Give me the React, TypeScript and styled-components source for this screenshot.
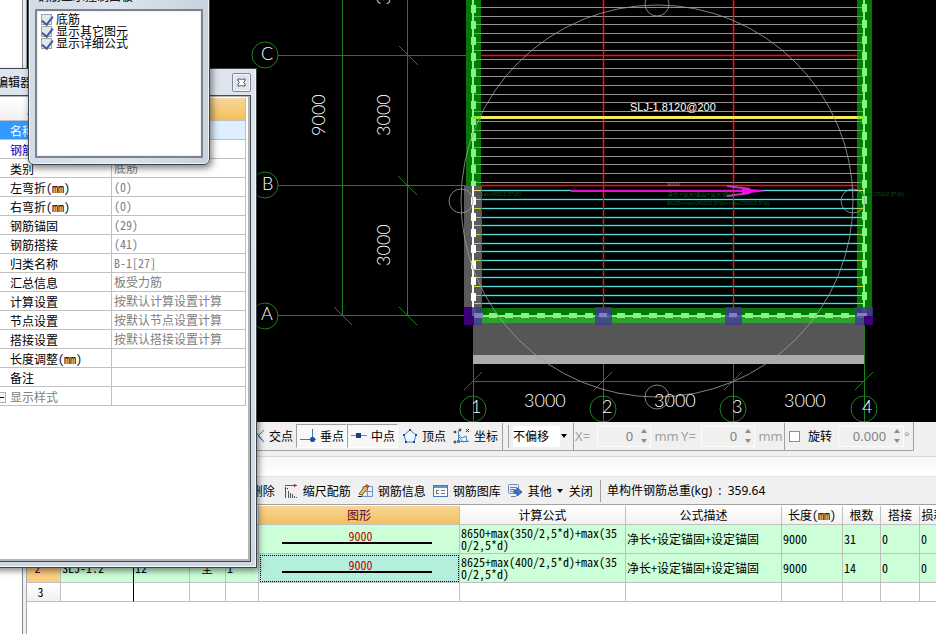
import React from "react";
import styled, { createGlobalStyle, css } from "styled-components";

const cjk = `"Noto Sans CJK SC", sans-serif`;
const mono = `"Noto Sans Mono CJK SC", "Liberation Mono", "Noto Sans CJK SC", monospace`;
const ui = `"Noto Sans", "Noto Sans CJK SC", sans-serif`;

const GlobalStyle = createGlobalStyle`
  * { box-sizing: border-box; }
  html, body, #root { height: 100%; margin: 0; }
  body { background: #fff; color: #000; font: 12px/16px ${cjk}; overflow: hidden; }
  button, input, select { font: inherit; color: inherit; }
`;

/* ---------- page ---------- */

const Page = styled.div`
  position: relative;
  display: grid;
  grid-template-columns: 22px 5px minmax(0, 1fr);
  height: 100vh;
  overflow: hidden;
`;

const SidePane = styled.aside`
  background: #fff;
`;

const Splitter = styled.div`
  background: #f0f0f0;
  border-left: 1px solid #828790;
  border-right: 1px solid #a8a8a8;
`;

const Main = styled.main`
  display: flex;
  flex-direction: column;
  min-width: 0;
  overflow: hidden;
`;

const Viewport = styled.section`
  flex: 1 1 0;
  min-height: 0;
  background: #000;

  svg {
    display: block;
    width: 100%;
    height: 100%;
  }
`;

/* ---------- snap bar ---------- */

const SnapArea = styled.div`
  flex: none;
  display: flex;
  height: 35px;
  padding-bottom: 5px;
  background: #f0f0f0;
  border-bottom: 1px solid #d8d8d8;
`;

const SnapBar = styled.div`
  display: flex;
  align-items: center;
  width: 887px;
  flex: none;
  height: 29px;
  padding-left: 222px;
  border-right: 1px solid #a0a0a0;
  border-bottom: 1px solid #a0a0a0;
  white-space: nowrap;
`;

const SnapButton = styled.button<{ $pressed?: boolean }>`
  display: flex;
  align-items: center;
  gap: 4px;
  height: 24px;
  padding: 0 2px 0 3px;
  border: 1px solid transparent;
  background: transparent;
  white-space: nowrap;
  ${(p) =>
    p.$pressed &&
    css`
      background: #f8f8f8;
      border-color: #a0a0a0 #fff #fff #a0a0a0;
    `}
`;

const Divider = styled.i<{ $h?: number; $gap?: number }>`
  flex: none;
  width: 1px;
  height: ${(p) => p.$h ?? 27}px;
  margin: 0 ${(p) => p.$gap ?? 0}px;
  background: #a0a0a0;
`;

const OffsetSelect = styled.select`
  appearance: none;
  width: 47px;
  height: 21px;
  padding: 0;
  border: 0;
  border-radius: 0;
  background: #fff;
`;

const SelectBox = styled.label`
  display: flex;
  align-items: center;
  gap: 1px;
  width: 59px;
`;

const Unit = styled.label<{ $w: number }>`
  width: ${(p) => p.$w}px;
  color: #a0a0a0;
  font-family: ${ui};
  font-size: 13px;
`;

const SpinBox = styled.div<{ $w: number }>`
  display: flex;
  align-items: center;
  width: ${(p) => p.$w}px;
  height: 21px;
  border: 1px solid #fcfcfc;
  color: #838383;

  input {
    flex: 1;
    width: 0;
    height: 18px;
    padding: 0 8px 0 0;
    border: 0;
    background: transparent;
    text-align: right;
    font: 13px/18px ${ui};
  }
`;

const Spinners = styled.span`
  display: flex;
  flex-direction: column;
  gap: 2px;
  padding-right: 3px;

  button {
    display: flex;
    padding: 2px 0;
    border: 0;
    background: transparent;
  }
`;

const TickBox = styled.input`
  appearance: none;
  position: relative;
  flex: none;
  width: 11px;
  height: 11px;
  margin: 0;
  border: 1px solid #8e8f8f;
  background: #fff;

  &:checked {
    border-color: #a0a4a8;
    background: #e3e7ea;
  }
  &:checked::before {
    content: "";
    position: absolute;
    left: 2px;
    top: -1px;
    width: 5px;
    height: 9px;
    border: solid #3d5a9c;
    border-width: 0 2px 2px 0;
    transform: rotate(38deg);
  }
`;

const RotateLabel = styled.label`
  display: flex;
  align-items: center;
  gap: 8px;
  width: 53px;
  padding-left: 4px;
`;

/* ---------- rebar panel ---------- */

const PanelCaption = styled.div`
  flex: none;
  height: 19px;
  background: linear-gradient(#f7f7f7, #fff);
`;

const Toolbar = styled.div`
  flex: none;
  display: flex;
  align-items: center;
  height: 29px;
  padding-left: 221px;
  background: #f0f0f0;
  border-top: 1px solid #e2e2e2;
  border-bottom: 1px solid #a0a0a0;
  white-space: nowrap;
`;

const ToolButton = styled.button<{ $mr: number }>`
  display: flex;
  align-items: center;
  gap: 5px;
  margin-right: ${(p) => p.$mr}px;
  padding: 0;
  border: 0;
  background: transparent;
  white-space: nowrap;
`;

const Total = styled.span`
  font-family: ${ui};
`;

const GridArea = styled.div`
  flex: none;
  min-height: 129px;
  padding-top: 1px;
  background: #fff;
  overflow: hidden;
`;

const Grid = styled.table`
  table-layout: fixed;
  width: 921px;
  border-collapse: separate;
  border-spacing: 0;
  font: 12px/12px ${mono};
`;

const Th = styled.th<{ $active?: boolean; $black?: boolean }>`
  height: 19px;
  padding: 0;
  overflow: hidden;
  white-space: nowrap;
  font-weight: 400;
  text-align: center;
  color: ${(p) => (p.$active ? "#600030" : "#000")};
  background: ${(p) =>
    p.$active ? "linear-gradient(#f8d596, #f2c05f)" : "linear-gradient(#fff, #f1f1f1)"};
  border-right: 1px solid ${(p) => (p.$black ? "#000" : "#c0c0c0")};
  border-bottom: 1px solid #c0c0c0;
`;

const Td = styled.td<{ $tone?: "green" | "teal"; $black?: boolean; $low?: boolean; $center?: boolean }>`
  height: ${(p) => (p.$low ? 19 : 29)}px;
  padding: 0 2px 0 1px;
  overflow: hidden;
  word-break: break-all;
  text-align: ${(p) => (p.$center ? "center" : "left")};
  background: ${(p) => (p.$tone === "green" ? "#ccffd8" : p.$tone === "teal" ? "#b4efde" : "#fff")};
  border-right: 1px solid ${(p) => (p.$black ? "#000" : "#c0c0c0")};
  border-bottom: 1px solid #c0c0c0;
  ${(p) => p.$tone === "teal" && "outline: 1px dotted #000; outline-offset: -2px;"}
`;

const RowHead = styled.th<{ $active?: boolean; $low?: boolean }>`
  height: ${(p) => (p.$low ? 19 : 29)}px;
  padding: 0 6px 0 0;
  font-weight: 400;
  color: ${(p) => (p.$active ? "#600030" : "#000")};
  background: ${(p) => (p.$active ? "#fbcf83" : "linear-gradient(#fff, #f1f1f1)")};
  border-right: 1px solid #c0c0c0;
  border-bottom: 1px solid #c0c0c0;
`;

const Shape = styled.span`
  display: block;
  width: 150px;
  margin: 0 auto 4px 22px;
  padding-left: 7px;
  border-bottom: 2px solid #000;
  color: #c00000;
  line-height: 12px;
  text-align: center;
`;

/* ---------- floating windows ---------- */

const PropertyWindow = styled.section`
  position: absolute;
  left: -60px;
  top: 68px;
  display: flex;
  flex-direction: column;
  width: 317px;
  height: 500px;
  padding: 0 5px 5px 0;
  border: 1px solid #3e444c;
  background: linear-gradient(#dfe5ee, #cfd9e5);
  box-shadow: inset -1px -1px 0 #f3f6fa, 2px 3px 6px rgba(0, 0, 0, 0.45);
`;

const PropertyTitle = styled.header`
  display: flex;
  align-items: center;
  justify-content: space-between;
  height: 26px;
  padding-left: 31px;
`;

const CloseButton = styled.button`
  display: flex;
  align-items: center;
  justify-content: center;
  width: 19px;
  height: 19px;
  margin-top: 1px;
  padding: 0;
  border: 1px solid #7f8793;
  border-radius: 2px;
  background: #dfe4eb;
  box-shadow: inset 0 0 0 1px #f5f7fa;
`;

const PropertyBody = styled.div`
  flex: 1;
  padding-top: 1px;
  background: #fff;
  border: solid #474c53;
  border-width: 1px 1px 1px 0;
  box-shadow: inset -2px -2px 0 #b4b4b4, inset 0 1px 0 #b4b4b4;
`;

const PropertyTable = styled.table`
  table-layout: fixed;
  width: 305px;
  margin-top: 1px;
  border-collapse: separate;
  border-spacing: 0;
  font: 12px/14px ${mono};
`;

const PropHead = styled.th<{ $active?: boolean }>`
  height: 23px;
  padding: 0 0 0 86px;
  text-align: left;
  font-weight: 400;
  background: ${(p) =>
    p.$active ? "linear-gradient(#f8d79b, #f2bf5c)" : "linear-gradient(#fff, #f0f0f0)"};
  border-right: 1px solid #c0c0c0;
  border-bottom: 1px solid #c0c0c0;
`;

const PropName = styled.th<{ $kind?: "selected" | "link" | "muted" }>`
  height: 19px;
  padding: 2px 0 0 69px;
  text-align: left;
  font-weight: 400;
  white-space: nowrap;
  color: ${(p) =>
    p.$kind === "selected" ? "#fff" : p.$kind === "link" ? "#0000c0" : p.$kind === "muted" ? "#808080" : "#000"};
  background: ${(p) => (p.$kind === "selected" ? "#3399ff" : "#fff")};
  border-right: 1px solid #c0c0c0;
  border-bottom: 1px solid #c0c0c0;
`;

const PropValue = styled.td<{ $selected?: boolean }>`
  height: 19px;
  padding: 0 0 0 2px;
  color: #808080;
  white-space: pre;
  background: ${(p) => (p.$selected ? "#dfefff" : "#fff")};
  border-right: 1px solid #c0c0c0;
  border-bottom: 1px solid #c0c0c0;
`;

const NameLine = styled.span`
  display: flex;
  align-items: center;
  height: 14px;
`;

const Expander = styled.button`
  display: flex;
  align-items: center;
  justify-content: center;
  width: 11px;
  height: 11px;
  margin: 0 4px 0 -15px;
  padding: 0;
  border: 1px solid #b0b0b0;
  background: #f4f4f4;
`;

const DisplayDialog = styled.section`
  position: absolute;
  left: 28px;
  top: -16px;
  width: 182px;
  height: 181px;
  padding: 0 6px 6px;
  border: 1px solid #40464e;
  border-radius: 6px;
  background: linear-gradient(90deg, #d2dbe6, #dde4ec 50%, #c7d2de);
  box-shadow: inset 0 0 0 1px #eef2f7, 2px 3px 7px rgba(0, 0, 0, 0.5);
`;

const DialogTitle = styled.h2`
  height: 24px;
  margin: 0;
  padding: 3px 0 0 2px;
  font: 12px/16px ${cjk};
`;

const CheckList = styled.div`
  height: 149px;
  padding: 2px 4px;
  border: 2px solid #7d838b;
  outline: 1px solid #eef2f7;
  outline-offset: -3px;
  box-shadow: inset 0 0 0 1px #8b9096;
  background: #fff;
`;

const CheckItem = styled.label`
  display: flex;
  align-items: center;
  gap: 4px;
  height: 12px;
  line-height: 12px;
  white-space: nowrap;
`;

/* ---------- icons ---------- */

const Arrow = ({ up = false, dark = false }: { up?: boolean; dark?: boolean }) => (
  <svg width="6" height="4" viewBox="0 0 6 4">
    <path d={up ? "M0 4L3 0L6 4Z" : "M0 0H6L3 4Z"} fill={dark ? "#000" : "#8c8c8c"} />
  </svg>
);

const CrossIcon = () => (
  <svg width="12" height="16" viewBox="0 0 12 16" fill="none" stroke="#3c6eb4">
    <path d="M1 2L11 14M11 2L5 8L11 14" />
  </svg>
);

const PerpIcon = () => (
  <svg width="16" height="16" viewBox="0 0 16 16">
    <path d="M0 11.500H16M12.500 1V12" stroke="#3c78be" fill="none" />
    <rect x="10" y="9" width="5" height="5" rx="2" fill="#1e50a0" />
  </svg>
);

const MidIcon = () => (
  <svg width="16" height="16" viewBox="0 0 16 16">
    <path d="M0 7.500H16" stroke="#5a8cc8" />
    <rect x="5" y="5" width="5" height="5" fill="#1e3c8c" />
  </svg>
);

const VertexIcon = () => (
  <svg width="16" height="16" viewBox="0 0 16 16">
    <path d="M8 2L14 7L12 14H4L2 7Z" stroke="#4682c8" fill="#eef6ff" />
    <path d="M7 1h2v2H7zM13 6h2v2h-2zM11 13h2v2h-2zM3 13h2v2H3zM1 6h2v2H1z" fill="#1e468c" />
  </svg>
);

const CoordIcon = () => (
  <svg width="17" height="17" viewBox="0 0 17 17" fill="none">
    <path d="M5.500 3V13.500H16M5 6L9 10L13 8L14 13L10 14L6 9" stroke="#4682be" />
    <path d="M13 1l3 3m0-3l-3 3" stroke="#333" />
    <circle cx="2" cy="4" r="1" stroke="#222" />
    <circle cx="7" cy="2" r="1" stroke="#222" />
    <circle cx="2" cy="14" r="1" stroke="#222" />
    <path d="M4 12h3v3H4z" fill="#4682be" />
  </svg>
);

const ScaleIcon = () => (
  <svg width="13" height="16" viewBox="0 0 13 16" fill="none">
    <path d="M0 2.500H12M9 1l2 1.500L9 4" stroke="#b03028" />
    <path d="M.5 4V15M3.500 8V15M5.500 10V15M7.500 11V15M9.500 13V15M11.500 14V15" stroke="#555" />
    <path d="M0 5.500h4" stroke="#222" strokeDasharray="1 1" />
  </svg>
);

const InfoIcon = () => (
  <svg width="15" height="15" viewBox="0 0 15 15" fill="none">
    <path d="M5 3.500H14.500V13.500H4.500Z" fill="#e6f0fc" stroke="#6e96c8" />
    <path d="M9.500 4V13M5 8.500H14" stroke="#6e96c8" />
    <path d="M1 11L7 3L10 5L4 12Z" fill="#e8c070" stroke="#7c5a28" />
    <path d="M7 3L8.500 1L12 3L10 5Z" fill="#c8503c" />
    <path d="M0 13.500h4" stroke="#222" />
  </svg>
);

const LibraryIcon = () => (
  <svg width="15" height="14" viewBox="0 0 15 14" fill="none">
    <rect x=".5" y="1.500" width="14" height="11" fill="#f4f8fd" stroke="#4678b4" />
    <path d="M1 3h13" stroke="#5a96dc" strokeWidth="2" />
    <path d="M3.500 6v4M3 6.500h3M3 9.500h3M8 6.500h4M8 9.500h4" stroke="#7c7060" />
  </svg>
);

const OtherIcon = () => (
  <svg width="15" height="14" viewBox="0 0 15 14" fill="none">
    <rect x=".5" y=".5" width="10" height="9" rx="1" fill="#e8f0fa" stroke="#6e8cb4" />
    <path d="M2 3.500h7M2 5.500h4M2 7.500h3M3 12.500h5" stroke="#6e82a0" />
    <path d="M6 6h3V4l5 4-5 4v-3H6z" fill="#3c78dc" stroke="#2850a0" />
  </svg>
);

/* ---------- drawing ---------- */

const CadText = styled.text`
  fill: #fff;
  font: 300 18px Lato, sans-serif;
`;

const RebarLabel = styled.text`
  fill: #fff;
  font: 11px "Liberation Sans", sans-serif;
`;

const TinyNote = styled.text<{ $grey?: boolean }>`
  fill: ${(p) => (p.$grey ? "#8c8c8c" : "#0c5016")};
  font: 6px "Liberation Sans", "Noto Sans CJK SC", sans-serif;
`;

const greyBars = [7, 16, 24, 33, 42, 50, 59, 68, 76, 85, 94, 102, 111, 121, 130, 138, 147, 156, 164, 173, 182];
const cyanBars = [190, 199, 208, 217, 225, 234, 243, 251, 260, 269, 277, 286, 295, 303];
const axes = [473, 603, 733, 864];

const Drawing = () => (
  <svg viewBox="27 0 909 422" role="img" aria-label="板钢筋平面图">
    <g fill="#1f801f" shapeRendering="crispEdges">
      <rect x="342" y="0" width="1" height="316" />
      <rect x="407" y="0" width="1" height="316" />
      <rect x="278" y="55" width="188" height="1" />
      <rect x="278" y="185" width="188" height="1" />
      <rect x="278" y="315" width="188" height="1" />
      <rect x="473" y="381" width="392" height="1" />
      {axes.map((x) => (
        <rect key={x} x={x} y="323" width="1" height="99" />
      ))}
    </g>

    <g fill="#460000">
      <rect x="481" y="54" width="376" height="3" />
      <rect x="481" y="184" width="376" height="3" />
      <rect x="602" y="0" width="3" height="308" />
      <rect x="732" y="0" width="3" height="308" />
    </g>
    {cyanBars.map((y) => (
      <rect key={y} x="481" y={y - 1} width="376" height="3" fill="#002828" />
    ))}
    {greyBars.map((y) => (
      <rect key={y} x="473" y={y} width="391" height="1" fill="#969090" />
    ))}
    {cyanBars.map((y) => (
      <rect key={y} x="473" y={y} width="391" height="1" fill="#5adcdc" />
    ))}
    <g fill="#c82323">
      <rect x="481" y="55" width="376" height="1" />
      <rect x="481" y="185" width="376" height="1" />
      <rect x="603" y="0" width="1" height="308" />
      <rect x="733" y="0" width="1" height="308" />
    </g>

    <rect x="466" y="0" width="15" height="186" fill="#047804" />
    <rect x="464" y="186" width="18" height="122" fill="#5a5a5a" />
    <rect x="857" y="0" width="15" height="323" fill="#047804" />
    <rect x="473" y="323" width="391" height="32" fill="#565656" />
    <rect x="473" y="355" width="391" height="9" fill="#acacac" />
    <rect x="473" y="308" width="391" height="8" fill="#047804" />
    <rect x="473" y="316" width="391" height="7" fill="#2ea02e" />

    {greyBars.map((y) => (
      <path key={y} d={`M473 ${y + 0.5}h8M857 ${y + 0.5}h7`} stroke="#50b450" />
    ))}
    {cyanBars.map((y) => (
      <path key={y} d={`M473 ${y + 0.5}h8M856 ${y + 0.5}h8`} stroke={y === 190 ? "#e0e070" : "#c8d040"} />
    ))}

    <rect x="472" y="0" width="2" height="186" fill="#82f582" />
    <rect x="472" y="186" width="2" height="130" fill="#fff" />
    <path d="M473.500 5V186" stroke="#82f582" strokeWidth="5" strokeDasharray="8 8" />
    <path d="M473.500 197V316" stroke="#fff" strokeWidth="5" strokeDasharray="8 8" />
    <rect x="863" y="0" width="2" height="316" fill="#82f582" />
    <path d="M864.500 4V312" stroke="#82f582" strokeWidth="5" strokeDasharray="8 8" />
    <rect x="473" y="315" width="391" height="2" fill="#82f582" />
    <path d="M489 315.500H864" stroke="#82f582" strokeWidth="5" strokeDasharray="8 8" />

    <rect x="473" y="116" width="391" height="3" fill="#f5eb5a" />
    <path d="M473 117.500h8M857 117.500h7" stroke="#8ce632" strokeWidth="3" />

    {[464, 595, 725, 855].map((x) => (
      <g key={x}>
        <rect x={x} y="307" width={x === 595 || x === 725 ? 17 : 18} height="18" fill="#46369b" fillOpacity=".8" />
        <rect x={x} y="308" width="17" height="7" fill="#373c78" fillOpacity=".5" />
      </g>
    ))}
    <path d="M464 307h8v9h2v9h-10zM864 316h9v9h-9z" fill="#3a0078" />
    <path d="M474 313h9v5h-9zM599 313h8v4h-8zM729 313h8v4h-8zM857 313h10v3h-10z" fill="#827ec8" />

    <g fill="none" stroke="#1f801f">
      <path d="M399 46L418 65M398 176L417 195M399 307L417 325M334 307L352 325" />
      {axes.map((x) => (
        <path key={x} d={`M${x - 9} 390L${x + 9} 372`} />
      ))}
      {[55, 185, 316].map((y) => (
        <circle key={y} cx="265" cy={y} r="13" />
      ))}
      {axes.map((x) => (
        <circle key={x} cx={x} cy="409" r="13" />
      ))}
    </g>

    <g fill="none" stroke="#a0a0a0" strokeOpacity=".8">
      <circle cx="657" cy="201" r="196" />
      <circle cx="657" cy="4" r="12" />
      <circle cx="461" cy="201" r="12" />
      <circle cx="853" cy="201" r="12" />
      <circle cx="657" cy="397" r="12" />
    </g>

    <TinyNote $grey x="667" y="186">9000</TinyNote>
    <TinyNote x="667" y="196">净长+设定锚固+设定锚固</TinyNote>
    <TinyNote x="667" y="205">8625+max(400/2,5*d)+max(350/2,5*d)</TinyNote>
    <TinyNote x="476" y="196">(max(400/2,5*d))</TinyNote>
    <TinyNote x="859" y="196">(max(350/2,5*d))</TinyNote>

    <rect x="571" y="190" width="180" height="2" fill="#dc14d2" />
    <path d="M742 188L766 191L742 194Z" fill="#ff00ff" />
    <path d="M727 186L750 189M727 196L750 193" stroke="#c832be" strokeWidth="2" />

    <RebarLabel x="630" y="111">SLJ-1.8120@200</RebarLabel>
    <CadText x="261" y="60">C</CadText>
    <CadText x="262" y="190">B</CadText>
    <CadText x="261" y="320">A</CadText>
    <CadText transform="translate(325 136) rotate(-90)">9000</CadText>
    <CadText transform="translate(390 136) rotate(-90)">3000</CadText>
    <CadText transform="translate(390 266) rotate(-90)">3000</CadText>
    <CadText transform="translate(390 5) rotate(-90)">3000</CadText>
    <CadText x="524" y="407">3000</CadText>
    <CadText x="654" y="407">3000</CadText>
    <CadText x="784" y="407">3000</CadText>
    <CadText x="471" y="413">1</CadText>
    <CadText x="602" y="413">2</CadText>
    <CadText x="732" y="413">3</CadText>
    <CadText x="862" y="413">4</CadText>
  </svg>
);

/* ---------- parts ---------- */

type SpinProps = { id: string; value: string; width: number; label: string };

const Spin = ({ id, value, width, label }: SpinProps) => (
  <SpinBox $w={width}>
    <input id={id} defaultValue={value} aria-label={label} />
    <Spinners>
      <button aria-label="增加"><Arrow up /></button>
      <button aria-label="减少"><Arrow /></button>
    </Spinners>
  </SpinBox>
);

type Kind = "selected" | "link" | "muted" | undefined;

const properties: { name: string; value: string; kind?: Kind }[] = [
  { name: "名称", value: "", kind: "selected" },
  { name: "钢筋信息", value: "", kind: "link" },
  { name: "类别", value: "底筋" },
  { name: "左弯折(mm)", value: "(0)" },
  { name: "右弯折(mm)", value: "(0)" },
  { name: "钢筋锚固", value: "(29)" },
  { name: "钢筋搭接", value: "(41)" },
  { name: "归类名称", value: "B-1[27]" },
  { name: "汇总信息", value: "板受力筋" },
  { name: "计算设置", value: "按默认计算设置计算" },
  { name: "节点设置", value: "按默认节点设置计算" },
  { name: "搭接设置", value: "按默认搭接设置计算" },
  { name: "长度调整(mm)", value: "" },
  { name: "备注", value: "" },
  { name: "显示样式", value: "", kind: "muted" },
];

const columns = [34, 73, 56, 36, 33, 201, 166, 156, 61, 38, 39, 28];
const heads = ["", "", "", "", "", "图形", "计算公式", "公式描述", "长度(mm)", "根数", "搭接", "损耗"];

const bars = [
  { no: "1", formula: "8650+max(350/2,5*d)+max(350/2,5*d)", count: "31", active: false },
  { no: "2*", formula: "8625+max(400/2,5*d)+max(350/2,5*d)", count: "14", active: true },
];

export default function App() {
  return (
    <>
      <GlobalStyle />
      <Page>
        <SidePane />
        <Splitter />
        <Main>
          <Viewport>
            <Drawing />
          </Viewport>

          <SnapArea>
            <SnapBar>
              <SnapButton><CrossIcon />交点</SnapButton>
              <SnapButton $pressed><PerpIcon />垂点</SnapButton>
              <SnapButton $pressed><MidIcon />中点</SnapButton>
              <SnapButton><VertexIcon />顶点</SnapButton>
              <SnapButton><CoordIcon />坐标</SnapButton>
              <Divider $gap={1} />
              <Divider $h={23} $gap={4} />
              <SelectBox>
                <OffsetSelect aria-label="偏移方式" defaultValue="none">
                  <option value="none">不偏移</option>
                </OffsetSelect>
                <Arrow dark />
              </SelectBox>
              <Divider $gap={1} />
              <Unit $w={22} htmlFor="offset-x">X=</Unit>
              <Spin id="offset-x" label="X 偏移" value="0" width={54} />
              <Unit $w={30} as="span">&nbsp;mm</Unit>
              <Unit $w={20} htmlFor="offset-y">Y=</Unit>
              <Spin id="offset-y" label="Y 偏移" value="0" width={54} />
              <Unit $w={29} as="span">&nbsp;mm</Unit>
              <Divider />
              <RotateLabel>
                <TickBox type="checkbox" />旋转
              </RotateLabel>
              <Spin id="rotation" label="旋转角度" value="0.000" width={66} />
              <Unit $w={8} as="span">°</Unit>
            </SnapBar>
          </SnapArea>

          <PanelCaption />

          <Toolbar>
            <ToolButton $mr={10}>&nbsp;删除</ToolButton>
            <ToolButton $mr={7}><ScaleIcon />缩尺配筋</ToolButton>
            <ToolButton $mr={7}><InfoIcon />钢筋信息</ToolButton>
            <ToolButton $mr={7}><LibraryIcon />钢筋图库</ToolButton>
            <ToolButton $mr={6}><OtherIcon />其他<Arrow dark /></ToolButton>
            <ToolButton $mr={7}>关闭</ToolButton>
            <Divider $h={22} />
            <Total>&nbsp;&nbsp;单构件钢筋总重(kg)&nbsp;&nbsp;:&nbsp;&nbsp;359.64</Total>
          </Toolbar>

          <GridArea>
            <Grid>
              <colgroup>
                {columns.map((w, i) => (
                  <col key={i} width={w} />
                ))}
              </colgroup>
              <thead>
                <tr>
                  {heads.map((h, i) => (
                    <Th key={i} $active={i === 5} $black={i === 1}>{h}</Th>
                  ))}
                </tr>
              </thead>
              <tbody>
                {bars.map((b) => (
                  <tr key={b.no}>
                    <RowHead $active={b.active}>{b.no}</RowHead>
                    <Td $tone="green" $black>SLJ-1.2</Td>
                    <Td $tone="green">12</Td>
                    <Td $tone="green" $center>全</Td>
                    <Td $tone="green">1</Td>
                    <Td $tone={b.active ? "teal" : "green"}><Shape>9000</Shape></Td>
                    <Td $tone="green">{b.formula}</Td>
                    <Td $tone="green">净长+设定锚固+设定锚固</Td>
                    <Td $tone="green">9000</Td>
                    <Td $tone="green">{b.count}</Td>
                    <Td $tone="green">0</Td>
                    <Td $tone="green">0</Td>
                  </tr>
                ))}
                <tr>
                  <RowHead $low>3</RowHead>
                  {columns.slice(1).map((_, i) => (
                    <Td key={i} $low $black={i === 0} />
                  ))}
                </tr>
              </tbody>
            </Grid>
          </GridArea>
        </Main>

        <PropertyWindow>
          <PropertyTitle>
            <span>属性编辑器</span>
            <CloseButton aria-label="关闭属性编辑器">
              <svg width="9" height="9" viewBox="0 0 9 9">
                <path d="M1 1h2.500l1 1 1-1H8v2L6.500 4.500 8 6v2H5.500l-1-1-1 1H1V6l1.500-1.500L1 3z" fill="#fff" stroke="#4a4f58" />
              </svg>
            </CloseButton>
          </PropertyTitle>
          <PropertyBody>
            <PropertyTable>
              <colgroup>
                <col width={171} />
                <col width={134} />
              </colgroup>
              <thead>
                <tr>
                  <PropHead>属性名称</PropHead>
                  <PropHead $active />
                </tr>
              </thead>
              <tbody>
                {properties.map((p) => (
                  <tr key={p.name}>
                    <PropName $kind={p.kind}>
                      <NameLine>
                        {p.kind === "muted" && (
                          <Expander aria-label="展开显示样式">
                            <svg width="7" height="1"><rect width="7" height="1" fill="#000" /></svg>
                          </Expander>
                        )}
                        {p.name}
                      </NameLine>
                    </PropName>
                    <PropValue $selected={p.kind === "selected"}>{p.value}</PropValue>
                  </tr>
                ))}
              </tbody>
            </PropertyTable>
          </PropertyBody>
        </PropertyWindow>

        <DisplayDialog>
          <DialogTitle>钢筋显示控制面板</DialogTitle>
          <CheckList>
            {["底筋", "显示其它图元", "显示详细公式"].map((t) => (
              <CheckItem key={t}>
                <TickBox type="checkbox" defaultChecked />
                {t}
              </CheckItem>
            ))}
          </CheckList>
        </DisplayDialog>
      </Page>
    </>
  );
}
